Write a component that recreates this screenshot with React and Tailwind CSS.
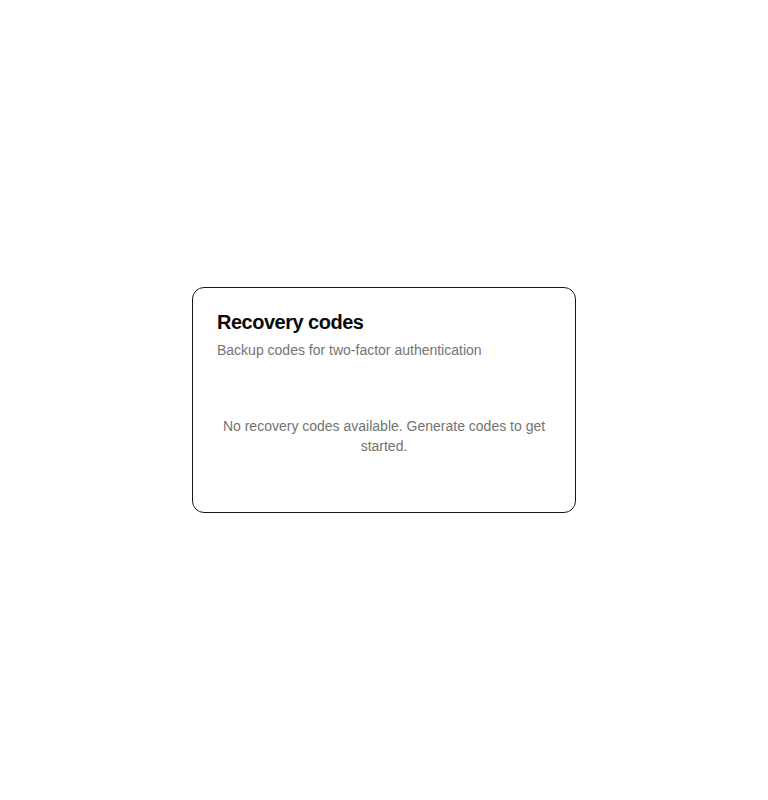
import React from "react";

export default function App() {
  return (
    <div
      className="min-h-[800px] w-full bg-white flex items-center justify-center"
      style={{ fontFamily: '"Liberation Sans", Arial, sans-serif' }}
    >
      <div className="w-96 rounded-xl border border-neutral-900 bg-white px-6 py-6">
        <div className="flex flex-col">
          <h2 className="text-xl leading-none font-bold tracking-tight text-neutral-950">
            Recovery codes
          </h2>
          <p className="mt-2 text-sm leading-5 text-neutral-500">
            Backup codes for two-factor authentication
          </p>
        </div>
        <div className="mt-6 pt-8 pb-8 text-center">
          <p className="text-sm leading-5 text-neutral-500">
            No recovery codes available. Generate codes to get started.
          </p>
        </div>
      </div>
    </div>
  );
}
